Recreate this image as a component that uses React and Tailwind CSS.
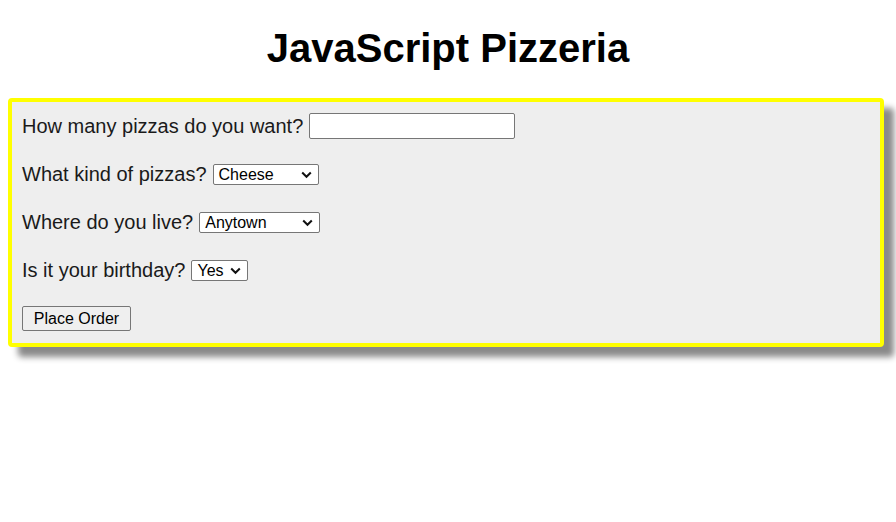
import React from "react";

const Chevron = () => (
  <svg width="11" height="8" viewBox="0 0 11 8" className="shrink-0">
    <path d="M1.2 1.5 L5.5 5.8 L9.8 1.5" fill="none" stroke="#111" strokeWidth="2" />
  </svg>
);

const Select = ({ value, width }) => (
  <div
    className="flex h-[21px] items-center justify-between rounded-[2px] border border-[#767676] bg-white pl-[5px] pr-[6px] pt-[1px] text-[16px] text-black"
    style={{ width }}
  >
    <span className="leading-none">{value}</span>
    <Chevron />
  </div>
);

const Row = ({ label, children }) => (
  <div className="flex h-[28px] items-center gap-[6px]">
    <span className="text-[20px] leading-none">{label}</span>
    {children}
  </div>
);

export default function App() {
  return (
    <div className="min-h-[522px] bg-white px-[8px] font-['Liberation_Sans',Arial,sans-serif] text-[#1a1a1a]">
      <h1 className="mb-[27px] pt-[25px] text-center text-[40px] font-bold leading-[46px] text-black">
        JavaScript Pizzeria
      </h1>

      <div className="mr-[4px] flex flex-col gap-[20px] rounded-[4px] border-[4px] border-[#ffff00] bg-[#eeeeee] px-[10px] pb-[11px] pt-[10px] shadow-[10px_10px_6px_#8a8a8a]">
        <Row label="How many pizzas do you want?">
          <div className="h-[26px] w-[206px] rounded-[2px] border border-[#767676] bg-white" />
        </Row>
        <Row label="What kind of pizzas?">
          <Select value="Cheese" width={106} />
        </Row>
        <Row label="Where do you live?">
          <Select value="Anytown" width={121} />
        </Row>
        <Row label="Is it your birthday?">
          <Select value="Yes" width={57} />
        </Row>
        <div className="flex h-[28px] items-center">
          <button className="h-[25px] w-[109px] rounded-[2px] border border-[#767676] bg-[#efefef] pt-[1px] text-[16px] leading-none text-black">
            Place Order
          </button>
        </div>
      </div>
    </div>
  );
}
